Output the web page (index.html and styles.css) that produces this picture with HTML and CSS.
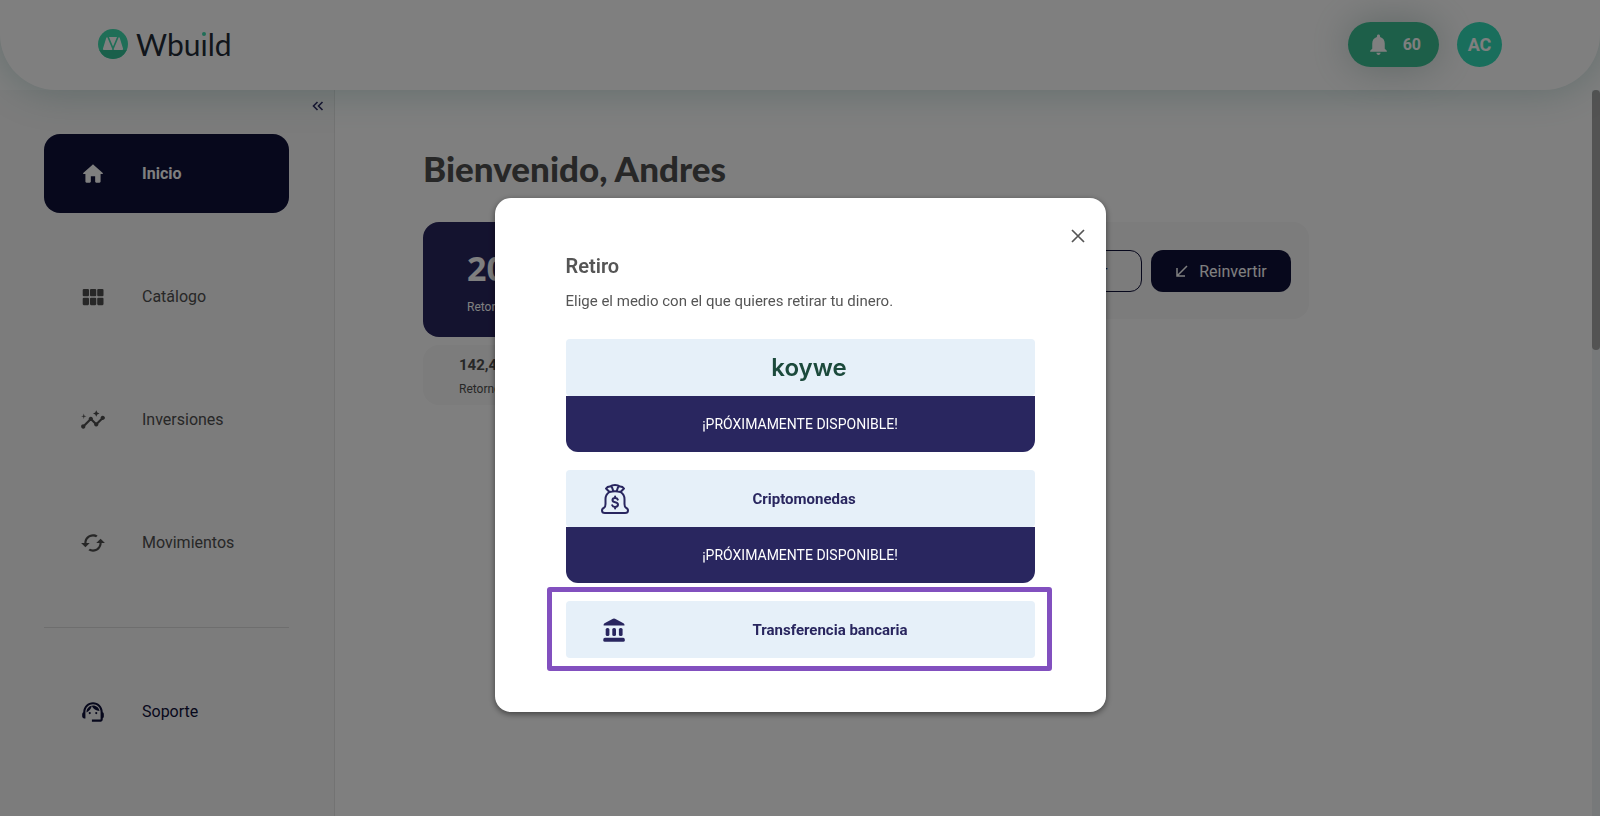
FILE: index.html
```html
<!DOCTYPE html>
<html lang="es">
<head>
<meta charset="utf-8">
<meta name="viewport" content="width=device-width, initial-scale=1">
<title>Wbuild</title>
<link rel="stylesheet" href="styles.css">
</head>
<body>
<div class="app">
  <header class="topbar">
    <a class="brand" href="#">
      <svg class="brand-mark" viewBox="0 0 30 30" aria-hidden="true"><circle cx="15" cy="15" r="15" fill="#3fdcae"/><path d="M1.300 21h27.400A15 15 0 0 1 1.300 21z" fill="#34c197"/><path d="M9.300 8.300 14.300 20q.2 1-.8 1H5.800q-1.300 0-.8-1.400L8.300 8.800q.5-1 1-.5zM20.700 8.300 15.700 20q-.2 1 .8 1h7.700q1.300 0 .8-1.400L21.700 8.800q-.5-1-1-.5zM11 8h8l-4 9.500z" fill="#fff"/></svg>
      <span class="brand-name">Wbu<span class="brand-i">ı</span>ld</span>
    </a>
    <div class="account">
      <button class="alerts" type="button" aria-label="Notificaciones: 60">
        <svg class="icon" viewBox="0 0 24 24" aria-hidden="true"><path d="M12 22c1.100 0 2-.9 2-2h-4c0 1.100.9 2 2 2zm6-6v-5c0-3.070-1.640-5.640-4.500-6.320V4c0-.83-.67-1.500-1.500-1.500s-1.500.67-1.500 1.500v.68C7.630 5.360 6 7.920 6 11v5l-2 2v1h16v-1l-2-2z"/></svg>
        <span>60</span>
      </button>
      <button class="avatar" type="button">AC</button>
    </div>
  </header>
  <div class="body">
    <aside class="sidebar">
      <button class="collapse" type="button" aria-label="Contraer menú">
        <svg viewBox="0 0 12 10" aria-hidden="true"><path d="M5.500 1 1.500 5l4 4M10.500 1l-4 4 4 4"/></svg>
      </button>
      <nav class="nav">
        <a class="nav-item nav-item-active" href="#"><svg class="icon" viewBox="0 0 24 24" aria-hidden="true"><path d="M10 19v-5h4v5c0 .55.45 1 1 1h3c.55 0 1-.45 1-1v-7h1.700c.46 0 .68-.57.33-.87L12.670 3.600c-.38-.34-.96-.34-1.340 0l-8.360 7.530c-.34.3-.13.87.33.87H5v7c0 .55.45 1 1 1h3c.55 0 1-.45 1-1z"/></svg><span>Inicio</span></a>
        <a class="nav-item" href="#"><svg class="icon" viewBox="0 0 24 24" aria-hidden="true"><rect x="2.500" y="4.500" width="5.800" height="6.900" rx="1"/><rect x="9.200" y="4.500" width="5.800" height="6.900" rx="1"/><rect x="15.900" y="4.500" width="5.800" height="6.900" rx="1"/><rect x="2.500" y="12.600" width="5.800" height="6.900" rx="1"/><rect x="9.200" y="12.600" width="5.800" height="6.900" rx="1"/><rect x="15.900" y="12.600" width="5.800" height="6.900" rx="1"/></svg><span>Catálogo</span></a>
        <a class="nav-item" href="#"><svg class="icon" viewBox="0 0 24 24" aria-hidden="true"><path d="M21 8c-1.450 0-2.260 1.440-1.930 2.510l-3.550 3.560c-.3-.09-.74-.09-1.040 0l-2.550-2.550C12.270 10.450 11.460 9 10 9c-1.450 0-2.270 1.440-1.930 2.520l-4.560 4.550C2.440 15.740 1 16.550 1 18c0 1.100.9 2 2 2 1.450 0 2.260-1.440 1.930-2.510l4.550-4.560c.3.09.74.09 1.040 0l2.550 2.550C12.730 16.550 13.540 18 15 18c1.450 0 2.270-1.440 1.930-2.520l3.560-3.550C21.560 12.260 23 11.450 23 10c0-1.100-.9-2-2-2z"/><path d="m15 9 .94-2.070L18 6l-2.060-.93L15 3l-.92 2.070L12 6l2.080.93zM3.500 11 4 9l2-.5L4 8l-.5-2L3 8l-2 .5L3 9z"/></svg><span>Inversiones</span></a>
        <a class="nav-item" href="#"><svg class="icon" viewBox="0 0 24 24" aria-hidden="true"><path d="m19 8-4 4h3c0 3.310-2.690 6-6 6-1.010 0-1.970-.25-2.800-.7l-1.460 1.460C8.970 19.540 10.430 20 12 20c4.420 0 8-3.580 8-8h3l-4-4zM6 12c0-3.310 2.690-6 6-6 1.010 0 1.970.25 2.800.7l1.460-1.460C15.030 4.460 13.570 4 12 4c-4.420 0-8 3.580-8 8H1l4 4 4-4H6z"/></svg><span>Movimientos</span></a>
        <hr class="nav-rule">
        <a class="nav-item nav-item-support" href="#"><svg class="icon" viewBox="0 0 24 24" aria-hidden="true"><path d="M21 12.220C21 6.730 16.740 3 12 3c-4.690 0-9 3.650-9 9.280-.6.340-1 .98-1 1.720v2c0 1.100.9 2 2 2h1v-6.100c0-3.870 3.130-7 7-7s7 3.130 7 7V19h-8v2h8c1.100 0 2-.9 2-2v-1.220c.59-.31 1-.92 1-1.640v-2.300c0-.7-.41-1.310-1-1.620z"/><circle cx="9" cy="13" r="1"/><circle cx="15" cy="13" r="1"/><path d="M18 11.030C17.520 8.180 15.040 6 12.050 6c-3.030 0-6.290 2.510-6.030 6.450 2.470-1.010 4.330-3.210 4.860-5.890 1.310 2.630 4 4.440 7.120 4.470z"/></svg><span>Soporte</span></a>
      </nav>
    </aside>
    <main class="main">
      <h1 class="welcome">Bienvenido, Andres</h1>
      <div class="summary">
        <section class="returns">
          <div class="card card-dark"><strong class="figure">20%</strong><span class="caption">Retorno</span></div>
          <div class="card card-light"><strong class="amount">142,4</strong><span class="caption">Retorno</span></div>
        </section>
        <section class="actions">
          <button class="btn btn-outline" type="button"><svg class="btn-icon" viewBox="0 0 14 14" aria-hidden="true"><path d="M2 12 12 2M4 2h8v8"/></svg>Retirar</button>
          <button class="btn btn-solid" type="button"><svg class="btn-icon" viewBox="0 0 14 14" aria-hidden="true"><path d="M12 2 2 12M2 4v8h8"/></svg>Reinvertir</button>
        </section>
      </div>
    </main>
    <div class="scroll-track" aria-hidden="true"><div class="scroll-thumb"></div></div>
  </div>
</div>
<div class="backdrop">
  <div class="modal" role="dialog" aria-modal="true" aria-labelledby="modal-title">
    <button class="close" type="button" aria-label="Cerrar"><svg viewBox="0 0 14 14" aria-hidden="true"><path d="m1 1 12 12M13 1 1 13"/></svg></button>
    <h2 class="modal-title" id="modal-title">Retiro</h2>
    <p class="modal-text">Elige el medio con el que quieres retirar tu dinero.</p>
    <div class="options">
      <div class="option">
        <button class="method method-logo" type="button"><span class="koywe">koywe</span></button>
        <p class="soon">¡PRÓXIMAMENTE DISPONIBLE!</p>
      </div>
      <div class="option">
        <button class="method" type="button">
          <svg class="method-icon" viewBox="0 0 28 30" aria-hidden="true"><g fill="none" stroke="#29265f" stroke-width="2" stroke-linejoin="round" stroke-linecap="round"><path d="M8.500 8 5 4.500Q6.500 2.500 9 2.600 11 1 14 1t5 1.600q2.500-.1 4 1.900L19.500 8M8.500 8q5.500-1.500 11 0M11 3.300l1.300 3.700M17 3.300 15.700 7M8.500 8Q4.500 10.500 4.500 15v5q0 3-1.500 3.800Q1 24.600 1 26.500 1 29 4 29h20q3 0 3-2.500 0-1.900-2-2.700-1.500-.8-1.500-3.800v-5q0-4.500-4-7"/><path d="M16.800 15.600q-.6-1.600-2.700-1.600-2.600 0-2.600 2.100 0 1.800 2.600 2.200 2.900.5 2.900 2.500 0 2.100-2.900 2.100-2.400 0-2.900-1.700M14.100 12.500v1.500M14.100 23v1.500"/></g></svg>
          <span>Criptomonedas</span>
        </button>
        <p class="soon">¡PRÓXIMAMENTE DISPONIBLE!</p>
      </div>
      <div class="option option-marked">
        <button class="method" type="button">
          <svg class="method-icon" viewBox="0 0 28 30" aria-hidden="true"><g fill="#29265f"><path d="M12 3.700q1-.5 2 0l8.500 4.500q1.300.9 1 2.300H2.600q-.3-1.400.9-2.300z"/><rect x="4.700" y="13" width="3.700" height="8" rx="1.600"/><rect x="11.300" y="13" width="3.700" height="8" rx="1.600"/><rect x="17.900" y="13" width="3.700" height="8" rx="1.600"/><rect x="2.300" y="22.800" width="21.500" height="4" rx="1.600"/></g></svg>
          <span>Transferencia bancaria</span>
        </button>
      </div>
    </div>
  </div>
</div>
</body>
</html>
```
FILE: styles.css
```css
* { box-sizing: border-box; }
body {
  margin: 0;
  font-family: Roboto, "Liberation Sans", sans-serif;
  font-size: 16px;
  color: #4f4f4f;
  background: #fff;
}
button { font: inherit; border: 0; padding: 0; background: none; color: inherit; }
a { color: inherit; text-decoration: none; }
svg { display: block; }
.app { min-height: 100vh; display: flex; flex-direction: column; background: #fff; overflow: hidden; }
.topbar {
  position: relative;
  z-index: 1;
  height: 90px;
  padding: 0 98px 2px;
  display: flex;
  align-items: center;
  justify-content: space-between;
  background: #fff;
  border-radius: 0 0 56px 56px;
  box-shadow: 0 0 40px rgba(48, 130, 120, .3);
}
.brand { display: flex; align-items: center; gap: 8px; }
.brand-mark { width: 30px; height: 30px; }
.brand-name { font-family: Lato, sans-serif; font-weight: 400; font-size: 30px; line-height: 34px; color: #222b36; }
.brand-i { position: relative; }
.brand-i::after {
  content: "";
  position: absolute;
  left: 50%;
  top: 6px;
  width: 4px;
  height: 4px;
  margin-left: -2px;
  border-radius: 50%;
  background: #3fdcae;
}
.account { display: flex; gap: 18px; }
.alerts {
  display: flex;
  align-items: center;
  gap: 12px;
  height: 45px;
  padding: 0 18px;
  border-radius: 23px;
  background: #3bbf93;
  color: #fff;
  font-weight: 700;
  box-shadow: 0 0 40px rgba(60, 110, 100, .35);
}
.icon { width: 26px; height: 26px; fill: currentColor; flex: none; }
.alerts .icon { width: 25px; height: 25px; }
.avatar { width: 45px; height: 45px; border-radius: 50%; background: #32ddb9; color: #fff; font-size: 18px; font-weight: 700; }
.body { flex: 1; display: flex; align-items: stretch; }
.sidebar {
  flex: 0 0 335px;
  padding: 8px 8px 64px 44px;
  background: #f8f8f8;
  border-right: 1px solid #e6e6e6;
}
.collapse { display: block; width: 16px; height: 16px; margin-left: auto; padding: 3px 2px; }
.collapse svg { width: 12px; height: 10px; fill: none; stroke: #29265f; stroke-width: 1.600; }
.nav { display: flex; flex-direction: column; gap: 44px; margin: 20px 37px 0 0; }
.nav-item { display: flex; align-items: center; gap: 36px; height: 79px; padding: 0 36px; border-radius: 16px; }
.nav-item-active { background: #0f1039; color: #fff; font-weight: 700; }
.nav-item-support { color: #0f1039; }
.nav-rule { width: 100%; margin: 1px 0 0; border: 0; border-top: 1px solid #dcdcdc; }
.main { flex: 1; padding: 56px 283px 0 88px; }
.welcome { margin: 0; font-family: Lato, "Open Sans", sans-serif; font-size: 35px; line-height: 44px; font-weight: 900; }
.summary { display: flex; justify-content: space-between; align-items: flex-start; margin-top: 32px; }
.returns { display: flex; flex-direction: column; gap: 8px; width: 360px; }
.card { display: flex; flex-direction: column; border-radius: 16px; }
.card-dark { padding: 25px 44px 20px; gap: 8px; background: #29265f; color: #fff; }
.card-light { padding: 10px 36px 6px; gap: 4px; background: #f8f8f8; }
.figure { font-family: "Noto Sans", sans-serif; font-size: 34px; line-height: 42px; }
.amount { font-size: 15px; line-height: 20px; }
.caption { font-size: 12px; line-height: 20px; }
.actions { display: flex; gap: 9px; padding: 28px 18px 27px; border-radius: 16px; background: #f8f8f8; }
.btn { display: flex; align-items: center; justify-content: center; gap: 10px; width: 140px; height: 42px; border-radius: 12px; }
.btn-outline { border: 1px solid #0f1039; color: #0f1039; }
.btn-solid { background: #0f1039; color: #fff; }
.btn-icon { width: 14px; height: 14px; fill: none; stroke: currentColor; stroke-width: 1.500; }
.scroll-track { flex: 0 0 8px; background: #eef2f4; }
.scroll-thumb { height: 260px; border-radius: 4px; background: #a6a6a6; }
.backdrop {
  position: fixed;
  inset: 0;
  z-index: 2;
  display: flex;
  align-items: center;
  justify-content: center;
  padding-top: 94px;
  background: rgba(0, 0, 0, .5);
}
.modal {
  position: relative;
  width: 611px;
  max-width: 100%;
  padding: 56px 71px 54px;
  border-radius: 16px;
  background: #fff;
  box-shadow: 0 2px 6px rgba(0, 0, 0, .5);
}
.close { position: absolute; top: 31px; right: 21px; padding: 0; }
.close svg { width: 14px; height: 14px; fill: none; stroke: #555; stroke-width: 1.700; }
.modal-title { margin: 0; font-size: 20px; line-height: 24px; font-weight: 600; color: #555; }
.modal-text { margin: 12px 0 27px; font-size: 15px; line-height: 22px; color: #555; }
.options { display: flex; flex-direction: column; gap: 18px; }
.option { position: relative; }
.option-marked::after {
  content: "";
  position: absolute;
  inset: -14px -17px -13px -19px;
  border: 5px solid #8250bf;
  border-radius: 3px;
  pointer-events: none;
}
.method {
  display: grid;
  grid-template-columns: 152px 1fr;
  align-items: center;
  width: 100%;
  height: 57px;
  padding-left: 35px;
  border-radius: 4px;
  background: #e6f0f9;
  color: #29265f;
  font-size: 15px;
  font-weight: 700;
  text-align: left;
}
.method-icon { width: 28px; height: 30px; }
.method-logo { display: block; padding: 0 0 0 18px; text-align: center; }
.koywe { font-family: Inter, sans-serif; font-size: 24px; line-height: 32px; font-weight: 600; color: #1c4a3c; }
.soon {
  margin: 0;
  padding: 18px 0;
  border-radius: 0 0 12px 12px;
  background: #29265f;
  color: #fff;
  font-size: 14px;
  line-height: 20px;
  text-align: center;
}
```
